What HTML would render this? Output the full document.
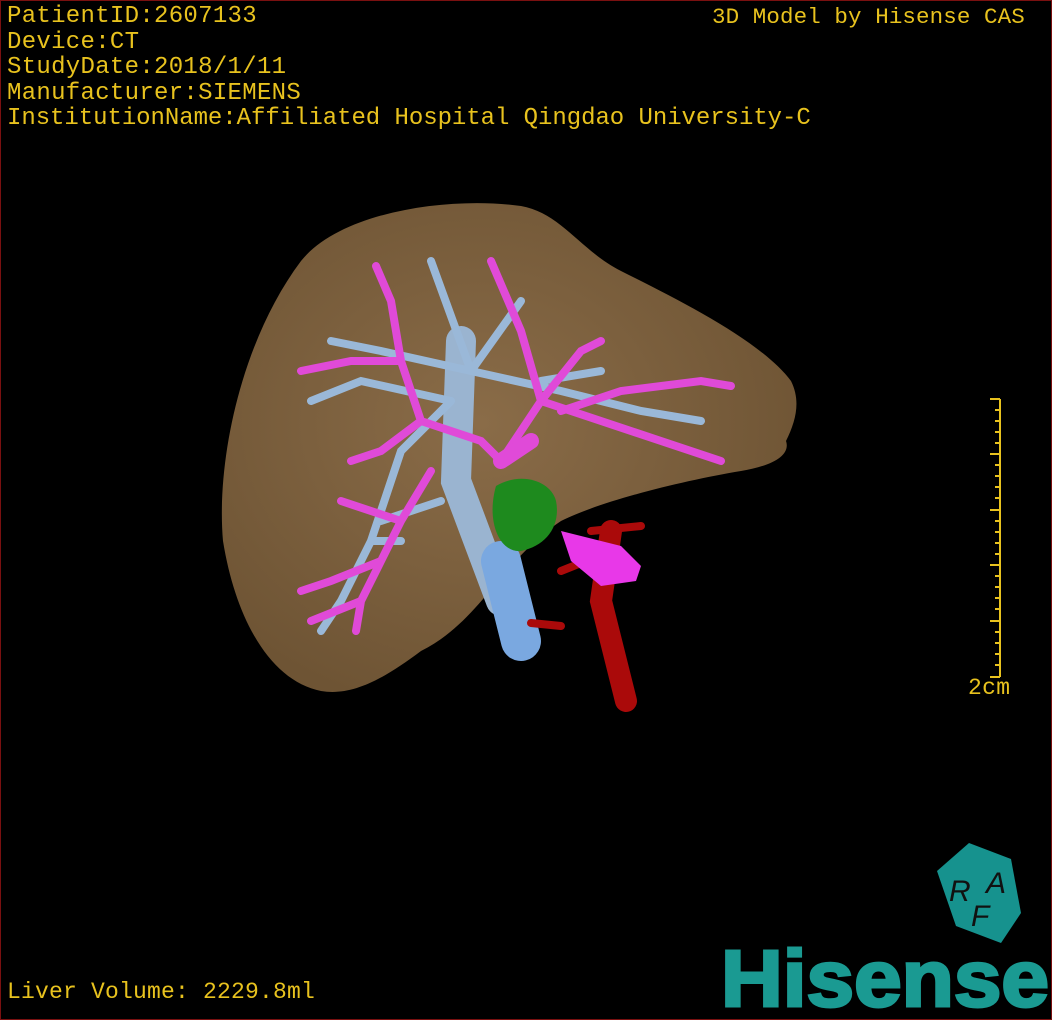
<!DOCTYPE html>
<html><head><meta charset="utf-8"><style>
html,body{margin:0;padding:0;background:#000}
#c{position:relative;width:1050px;height:1018px;border:1px solid #7a1010;background:#000;overflow:hidden;font-family:"Liberation Mono",monospace;color:#e8c21e}
.t{position:absolute;left:6px;font-size:24px;line-height:25px;white-space:pre;letter-spacing:0.3px}
</style></head><body><div id="c">
<div class="t" style="top:3px">PatientID:2607133</div>
<div class="t" style="top:29px">Device:CT</div>
<div class="t" style="top:54px">StudyDate:2018/1/11</div>
<div class="t" style="top:80px">Manufacturer:SIEMENS</div>
<div class="t" style="top:105px;letter-spacing:-0.05px">InstitutionName:Affiliated Hospital Qingdao University-C</div>
<div class="t" style="top:4px;left:711px;font-size:22.5px;letter-spacing:0.1px">3D Model by Hisense CAS</div>
<div class="t" style="top:979px;font-size:23px;letter-spacing:0.2px">Liver Volume: 2229.8ml</div>
<div class="t" style="top:675px;left:967px;font-size:23px">2cm</div>
<svg width="1050" height="1018" style="position:absolute;left:0;top:0">
<defs><radialGradient id="lg" cx="0.45" cy="0.45" r="0.6"><stop offset="0" stop-color="#8a6c48"/><stop offset="1" stop-color="#6e5434"/></radialGradient></defs>
<path d="M300,260 C340,210 450,195 520,205 C560,212 580,250 620,270 C680,300 760,340 790,380 C800,400 795,420 785,440 C790,455 770,465 740,470 C680,480 600,500 560,520 C500,560 480,620 420,650 C380,680 350,695 320,690 C270,680 235,620 222,540 C215,460 240,340 300,260 Z" fill="url(#lg)"/>
<g fill="none" stroke-linecap="round">
<path d="M460,340 L455,480 L500,600" stroke="#9ab4d0" stroke-width="30"/>
<path d="M500,560 L520,640" stroke="#7aa8e0" stroke-width="40"/>
<g stroke="#9ab8d8" stroke-width="8">
<path d="M470,370 L430,260 M470,370 L520,300 M470,370 L560,390 L640,410 L700,420 M470,370 L380,350 L330,340 M450,400 L400,450 L370,540 L340,600 L320,630 M450,400 L360,380 L310,400 M440,500 L380,520 M370,540 L400,540 M540,380 L600,370"/>
</g>
<g stroke="#e04ad8" stroke-width="8">
<path d="M500,460 L480,440 L420,420 L400,360 L390,300 L375,265 M400,360 L350,360 L300,370 M420,420 L380,450 L350,460 M430,470 L400,520 L380,560 L360,600 L355,630 M500,460 L540,400 L520,330 L490,260 M540,400 L600,420 L660,440 L720,460 M560,410 L620,390 L700,380 L730,385 M540,400 L580,350 L600,340 M380,560 L330,580 L300,590 M400,520 L340,500 M360,600 L310,620"/>
</g>
<path d="M500,460 L530,440" stroke="#e04ad8" stroke-width="16"/>
<path d="M610,530 L600,600 L625,700" stroke="#aa0a0a" stroke-width="22"/>
<path d="M590,530 L640,525 M585,560 L560,570 M530,622 L560,625" stroke="#aa0a0a" stroke-width="8"/>
</g>
<path d="M560,530 L620,545 L640,565 L635,580 L600,585 L570,560 Z" fill="#e838e8"/>
<path d="M495,485 C520,470 550,480 555,500 C560,525 545,545 520,550 C498,552 485,520 495,485 Z" fill="#1e8a1e"/>
<g stroke="#e8c21e" stroke-width="2">
<line x1="999" y1="398" x2="999" y2="676"/>
<path d="M989,398h10M989,453h10M989,509h10M989,564h10M989,620h10M989,676h10"/>
<path d="M994,409h5M994,420h5M994,431h5M994,442h5M994,464h5M994,475h5M994,486h5M994,497h5M994,520h5M994,531h5M994,542h5M994,553h5M994,575h5M994,586h5M994,597h5M994,608h5M994,631h5M994,642h5M994,653h5M994,664h5"/>
</g>
<polygon points="968,842 1010,858 1020,912 1000,942 955,925 936,870" fill="#16928e"/>
<text x="948" y="900" font-family="Liberation Sans,sans-serif" font-size="30" font-style="italic" fill="#111">R</text>
<text x="985" y="892" font-family="Liberation Sans,sans-serif" font-size="30" font-style="italic" fill="#111">A</text>
<text x="970" y="925" font-family="Liberation Sans,sans-serif" font-size="30" font-style="italic" fill="#111">F</text>
<text x="720" y="1005" font-family="Liberation Sans,sans-serif" font-size="80" font-weight="bold" fill="#1a9a92" stroke="#1a9a92" stroke-width="3" textLength="328" lengthAdjust="spacingAndGlyphs">Hisense</text>
</svg>
</div></body></html>
